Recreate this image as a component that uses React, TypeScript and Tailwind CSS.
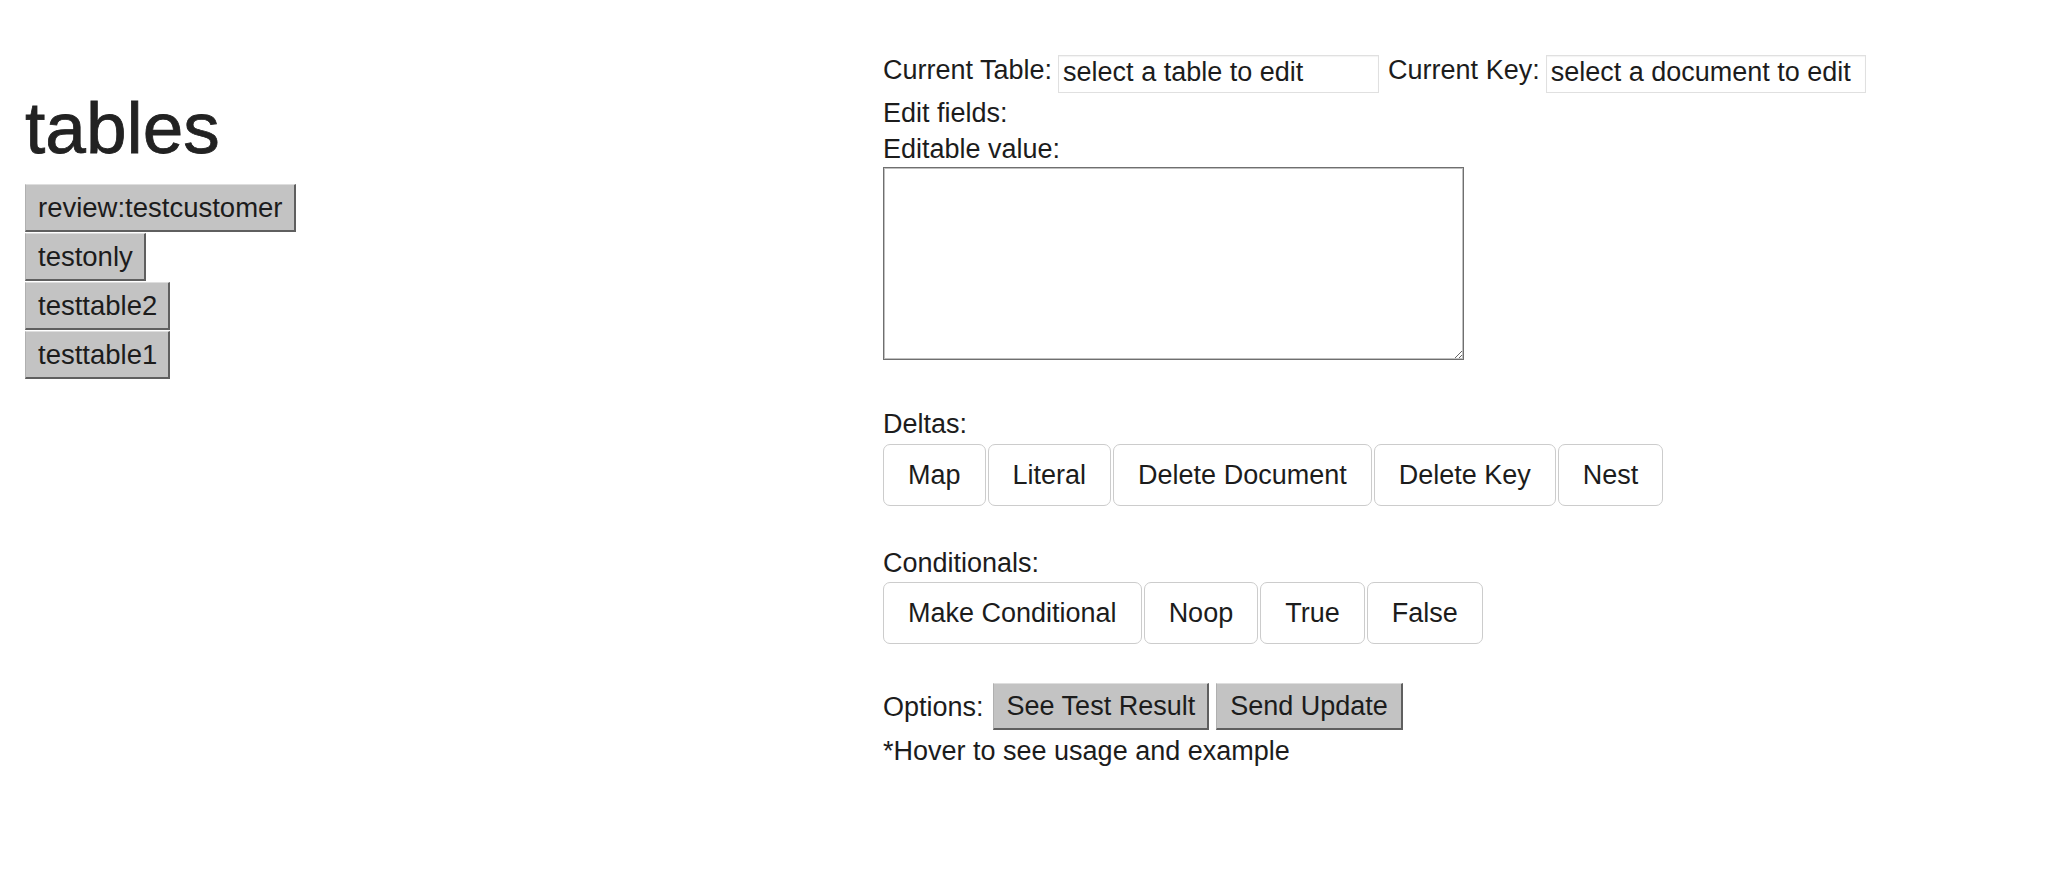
import React from "react";

const tableNames = ["review:testcustomer", "testonly", "testtable2", "testtable1"];
const deltas = ["Map", "Literal", "Delete Document", "Delete Key", "Nest"];
const conditionals = ["Make Conditional", "Noop", "True", "False"];

function GrayButton({ label, className }: { label: string; className?: string }) {
  return (
    <button
      type="button"
      className={
        "flex items-center bg-[#c3c3c3] text-[#1c1c1c] border-solid border-t border-l border-r-2 border-b-2 border-t-[#dedede] border-l-[#b0b0b0] border-r-[#5f5f5f] border-b-[#5f5f5f] " +
        (className ?? "")
      }
    >
      {label}
    </button>
  );
}

function WhiteButton({ label }: { label: string }) {
  return (
    <button
      type="button"
      className="flex h-[62px] items-center rounded-[7px] border border-[#cccccc] bg-white px-[24px] text-[27px] text-[#1c1c1c]"
    >
      {label}
    </button>
  );
}

export default function App() {
  return (
    <div className="flex min-h-[892px] w-full bg-white font-['Liberation_Sans',Arial,sans-serif] text-[#1c1c1c]">
      {/* Left column */}
      <div className="w-[883px] shrink-0 pl-[25px] pt-[88px]">
        <h1 className="mb-[17px] text-[73px] font-normal leading-[79px] text-[#222] [-webkit-text-stroke:0.8px_#222]">
          tables
        </h1>
        <div className="flex flex-col items-start gap-[1px]">
          {tableNames.map((t) => (
            <GrayButton key={t} label={t} className="h-[48px] pl-[12px] pr-[11px] text-[27.5px]" />
          ))}
        </div>
      </div>

      {/* Right column */}
      <div className="flex-1 pt-[55px] text-[27px]">
        <div className="flex h-[40px] items-start">
          <span className="leading-[30px]">Current Table:</span>
          <div className="ml-[6px] h-[38px] w-[321px] border border-[#e0e0e0] pl-[4px] pt-[1px] leading-[30px] shadow-[inset_0_1px_1px_rgba(0,0,0,0.05)]">
            select a table to edit
          </div>
          <span className="ml-[9px] leading-[30px]">Current Key:</span>
          <div className="ml-[6px] h-[38px] w-[320px] border border-[#e0e0e0] pl-[4px] pt-[1px] leading-[30px] shadow-[inset_0_1px_1px_rgba(0,0,0,0.05)]">
            select a document to edit
          </div>
        </div>

        <div className="leading-[36px]">Edit fields:</div>
        <div className="leading-[36px]">Editable value:</div>
        <textarea
          className="block h-[193px] w-[581px] border border-[#6f6f6f] bg-white shadow-[inset_0_0_0_1px_#c0c0c0]"
          defaultValue=""
        />

        <div className="mt-[46px] leading-[36px]">Deltas:</div>
        <div className="mt-[2px] flex gap-[2px]">
          {deltas.map((d) => (
            <WhiteButton key={d} label={d} />
          ))}
        </div>

        <div className="mt-[39px] leading-[36px]">Conditionals:</div>
        <div className="mt-[1px] flex gap-[2px]">
          {conditionals.map((c) => (
            <WhiteButton key={c} label={c} />
          ))}
        </div>

        <div className="mt-[39px] flex h-[47px] items-center">
          <span className="leading-[30px]">Options:</span>
          <GrayButton label="See Test Result" className="ml-[9px] h-[47px] pl-[13px] pr-[12px]" />
          <GrayButton label="Send Update" className="ml-[7px] h-[47px] pl-[13px] pr-[13px]" />
        </div>
        <div className="mt-[3px] leading-[36px]">*Hover to see usage and example</div>
      </div>
    </div>
  );
}
